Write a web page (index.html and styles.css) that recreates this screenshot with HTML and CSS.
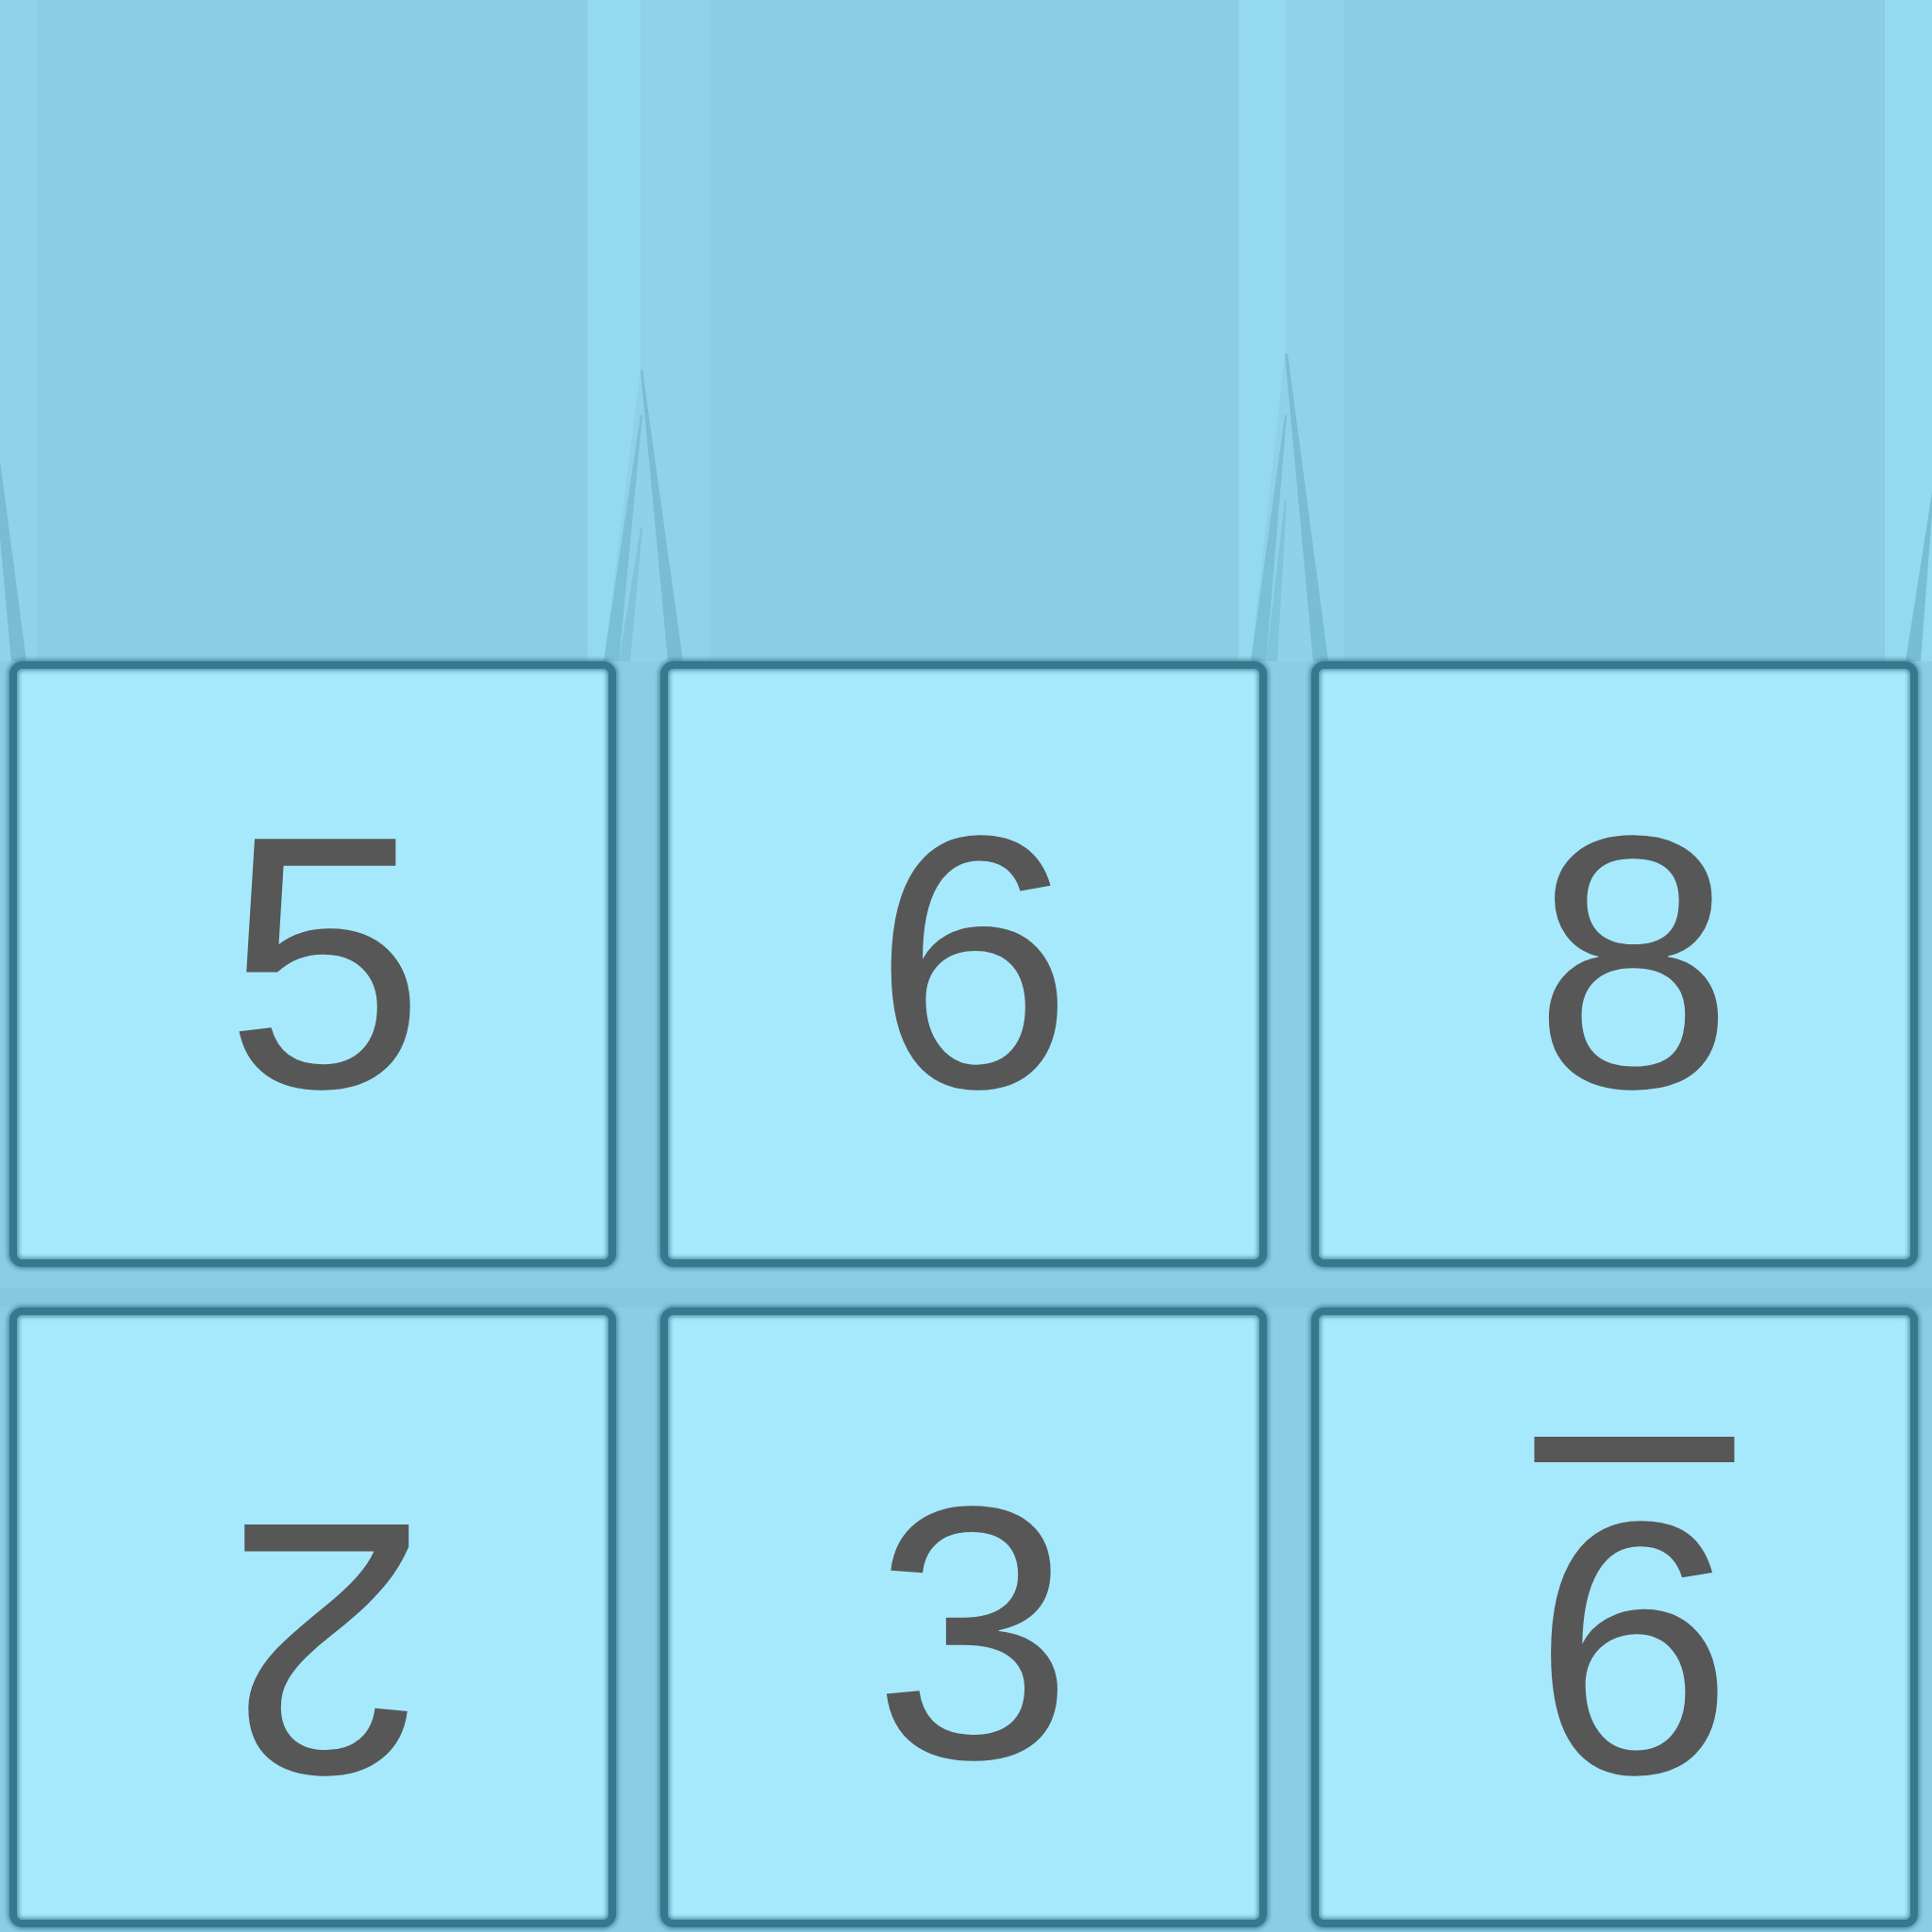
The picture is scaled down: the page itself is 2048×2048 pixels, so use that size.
FILE: index.html
```html
<!DOCTYPE html>
<html>
<head>
<meta charset="utf-8">
<link rel="stylesheet" href="styles.css">
</head>
<body>
<div class="page">
  <svg class="scene" viewBox="0 0 2048 701" width="2048" height="701" xmlns="http://www.w3.org/2000/svg">
    <rect x="0" y="0" width="2048" height="701" fill="#8bcde4"/>
    <rect x="0" y="0" width="39" height="701" fill="#90d2e9"/>
    <rect x="623" y="0" width="56" height="701" fill="#95d9ef"/>
    <rect x="679" y="0" width="74" height="701" fill="#8fd2e9"/>
    <rect x="1313" y="0" width="50" height="701" fill="#95d9ef"/>
    <rect x="1363" y="0" width="62" height="701" fill="#8fd2e9"/>
    <rect x="1998" y="0" width="50" height="701" fill="#95d9ef"/>
    <!-- gap 1 spike -->
    <polygon points="679,392 640,701 720,701" fill="#8ed1e8"/>
    <polygon points="679,392 681,392 724,701 708,701" fill="#78bdd3"/>
    <polygon points="679,440 681,440 656,701 640,701" fill="#7bbfd5"/>
    <polygon points="679,560 681,560 668,701 656,701" fill="#80c4da"/>
    <!-- gap 2 spike -->
    <polygon points="1362,375 1326,701 1408,701" fill="#8ed1e8"/>
    <polygon points="1362,375 1365,375 1408,701 1392,701" fill="#78bdd3"/>
    <polygon points="1362,440 1364,440 1342,701 1326,701" fill="#7bbfd5"/>
    <polygon points="1362,530 1364,530 1354,701 1342,701" fill="#80c4da"/>
    <!-- right edge spike -->
    <polygon points="2048,522 2048,545 2036,701 2020,701" fill="#78bdd3"/>
    <!-- left edge spike -->
    <polygon points="0,488 0,570 12,701 28,701" fill="#78bdd3"/>
  </svg>
  <div class="grid">
    <div class="tile"><span class="digit">5</span></div>
    <div class="tile"><span class="digit">6</span></div>
    <div class="tile"><span class="digit">8</span></div>
    <div class="tile"><span class="digit flip">2</span></div>
    <div class="tile"><span class="digit">3</span></div>
    <div class="tile"><span class="digit flip marked">9<span class="bar"></span></span></div>
  </div>
</div>
</body>
</html>
```

FILE: styles.css
```css
html, body {
  margin: 0;
  padding: 0;
  background: #8bcde4;
}

.page {
  width: 2048px;
  height: 2048px;
  overflow: hidden;
  background: #8bcde4;
}

.scene {
  display: block;
}

.grid {
  display: grid;
  grid-template-columns: repeat(3, 643px);
  grid-template-rows: 642px 657px;
  column-gap: 47px;
  row-gap: 43px;
  padding-left: 10px;
  background: linear-gradient(to bottom, #8bcde4 0, #8bcde4 664px, #85c8e0 664px, #85c8e0 685px, #8bcde4 685px);
}

.tile {
  box-sizing: border-box;
  border: 8px solid #38788e;
  border-radius: 14px;
  background: #a6e9fc;
  box-shadow: 0 0 4px 2px rgba(56, 120, 142, 0.75), inset 0 0 4px 2px rgba(56, 120, 142, 0.75);
  display: flex;
  align-items: center;
  justify-content: center;
}

.digit {
  font-family: "Liberation Sans", Arial, sans-serif;
  font-size: 382px;
  line-height: 1;
  color: #575757;
  display: inline-block;
  position: relative;
}

.tile:nth-child(3n+1) .digit { transform: translate(13px, -2px); }
.tile:nth-child(3n+2) .digit { transform: translate(10px, -2px); }
.tile:nth-child(3n) .digit { transform: translate(20px, -2px); }

.tile:nth-child(4) .digit { transform: translate(15px, 33px) rotate(180deg); }
.tile:nth-child(5) .digit { transform: translate(10px, 16px); }
.tile:nth-child(6) .digit { transform: translate(21px, 33px) rotate(180deg); }

.marked .bar {
  position: absolute;
  left: 0;
  right: 0;
  top: 100%;
  height: 27px;
  margin-top: 7px;
  background: #575757;
}
```
